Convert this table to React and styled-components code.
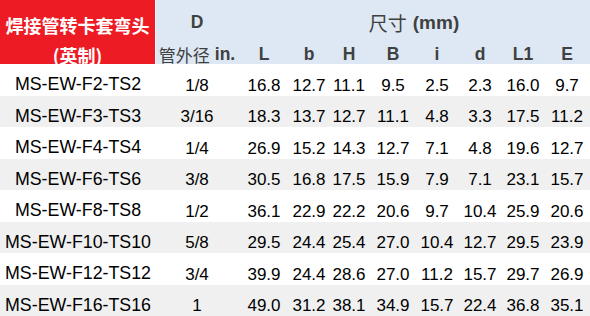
import styled, { createGlobalStyle } from 'styled-components'

const GlobalStyle = createGlobalStyle`
	html, body {
		margin: 0;
		padding: 0;
		background: #fff;
	}
	body {
		font-family: 'Liberation Sans', Arial, 'Noto Sans CJK SC', sans-serif;
	}
`

const COLS = '156px 82px 52px 38px 42px 46px 42px 44px 42px 46px'

const Table = styled.div`
	width: 590px;
	display: flex;
	flex-direction: column;
`

const Head = styled.div`
	display: grid;
	grid-template-columns: ${COLS};
	grid-template-rows: 32px 32px;
	background: #dde8f4;
	color: #404040;
`

const TitleCell = styled.div`
	grid-row: 1 / span 2;
	background: #ed1c24;
	color: #fff;
	font-family: 'Noto Sans CJK SC', sans-serif;
	font-weight: 700;
	font-size: 18px;
	display: grid;
	grid-template-rows: 32px 32px;
	justify-items: center;
	border-right: 1px solid #f4f7fb;

	span {
		line-height: 1;
		align-self: end;
		margin-bottom: 0;
	}
	span:first-child {
		margin-bottom: -2px;
	}
`

const HeadCell = styled.div`
	grid-column: ${(p) => p.$span || 'auto'};
	display: flex;
	align-items: flex-end;
	justify-content: center;
	padding-bottom: ${(p) => p.$pb ?? 1}px;
	font-size: ${(p) => p.$size || 17.5}px;
	font-weight: 700;
	white-space: nowrap;
	line-height: 1;
`

const Cjk = styled.span`
	font-family: 'Noto Sans CJK SC', sans-serif;
	font-weight: 400;
	font-size: ${(p) => p.$size || 17}px;
	margin-right: ${(p) => p.$gap || 0}px;
`

const Row = styled.div`
	display: grid;
	grid-template-columns: ${COLS};
	height: 31.5px;
	background: ${(p) => (p.$alt ? '#f0f0f0' : '#fff')};
	color: #000;
`

const Cell = styled.div`
	display: flex;
	align-items: center;
	justify-content: center;
	padding-top: 11px;
	box-sizing: border-box;
	font-size: ${(p) => (p.$code ? '17.8px' : '17px')};
	white-space: nowrap;
	line-height: 1;
`

const rows = [
	['MS-EW-F2-TS2', '1/8', '16.8', '12.7', '11.1', '9.5', '2.5', '2.3', '16.0', '9.7'],
	['MS-EW-F3-TS3', '3/16', '18.3', '13.7', '12.7', '11.1', '4.8', '3.3', '17.5', '11.2'],
	['MS-EW-F4-TS4', '1/4', '26.9', '15.2', '14.3', '12.7', '7.1', '4.8', '19.6', '12.7'],
	['MS-EW-F6-TS6', '3/8', '30.5', '16.8', '17.5', '15.9', '7.9', '7.1', '23.1', '15.7'],
	['MS-EW-F8-TS8', '1/2', '36.1', '22.9', '22.2', '20.6', '9.7', '10.4', '25.9', '20.6'],
	['MS-EW-F10-TS10', '5/8', '29.5', '24.4', '25.4', '27.0', '10.4', '12.7', '29.5', '23.9'],
	['MS-EW-F12-TS12', '3/4', '39.9', '24.4', '28.6', '27.0', '11.2', '15.7', '29.7', '26.9'],
	['MS-EW-F16-TS16', '1', '49.0', '31.2', '38.1', '34.9', '15.7', '22.4', '36.8', '35.1'],
]

const dims = ['L', 'b', 'H', 'B', 'i', 'd', 'L1', 'E']

export default function App() {
	return (
		<>
			<GlobalStyle />
			<Table>
				<Head>
					<TitleCell>
						<span>焊接管转卡套弯头</span>
						<span>(英制)</span>
					</TitleCell>
					<HeadCell>D</HeadCell>
					<HeadCell $span="3 / span 8" $size={19} $pb={0}>
						<Cjk $gap={6} $size={19}>尺寸</Cjk>(mm)
					</HeadCell>
					<HeadCell>
						<Cjk $gap={5}>管外径</Cjk>in.
					</HeadCell>
					{dims.map((d) => (
						<HeadCell key={d}>{d}</HeadCell>
					))}
				</Head>
				{rows.map((r, i) => (
					<Row key={r[0]} $alt={i % 2 === 1}>
						{r.map((v, j) => (
							<Cell key={j} $code={j === 0}>
								{v}
							</Cell>
						))}
					</Row>
				))}
			</Table>
		</>
	)
}
